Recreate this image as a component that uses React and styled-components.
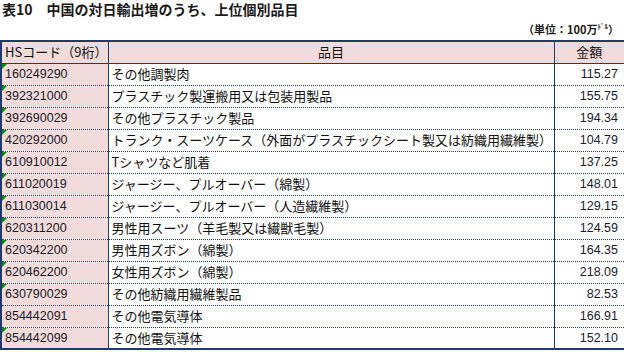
import React from 'react';
import styled, { createGlobalStyle } from 'styled-components';

const GlobalStyle = createGlobalStyle`
  html, body {
    margin: 0;
    padding: 0;
    background: #ffffff;
  }
  body {
    font-family: "Noto Sans CJK JP", "Noto Sans", sans-serif;
    color: #111;
  }
`;

const rows = [
  { code: '160249290', name: 'その他調製肉', value: '115.27', mark: true },
  { code: '392321000', name: 'プラスチック製運搬用又は包装用製品', value: '155.75', mark: true },
  { code: '392690029', name: 'その他プラスチック製品', value: '194.34', mark: true },
  { code: '420292000', name: 'トランク・スーツケース（外面がプラスチックシート製又は紡織用繊維製）', value: '104.79', mark: true },
  { code: '610910012', name: 'Tシャツなど肌着', value: '137.25', mark: true },
  { code: '611020019', name: 'ジャージー、プルオーバー（綿製）', value: '148.01', mark: true },
  { code: '611030014', name: 'ジャージー、プルオーバー（人造繊維製）', value: '129.15', mark: true },
  { code: '620311200', name: '男性用スーツ（羊毛製又は繊獣毛製）', value: '124.59', mark: true },
  { code: '620342200', name: '男性用ズボン（綿製）', value: '164.35', mark: true },
  { code: '620462200', name: '女性用ズボン（綿製）', value: '218.09', mark: true },
  { code: '630790029', name: 'その他紡織用繊維製品', value: '82.53', mark: true },
  { code: '854442091', name: 'その他電気導体', value: '166.91', mark: false },
  { code: '854442099', name: 'その他電気導体', value: '152.10', mark: true },
];

const App = () => {
  return (
    <Page>
      <GlobalStyle />
      <Title>表10　中国の対日輸出増のうち、上位個別品目</Title>
      <Unit>
        （単位：100万<small>ﾄﾞﾙ</small>）
      </Unit>
      <Table>
        <colgroup>
          <col style={{ width: 107 }} />
          <col style={{ width: 446 }} />
          <col style={{ width: 71 }} />
        </colgroup>
        <thead>
          <Row>
            <HeadCell align="left">HSコード（9桁）</HeadCell>
            <HeadCell>品目</HeadCell>
            <HeadCell>金額</HeadCell>
          </Row>
        </thead>
        <tbody>
          {rows.map(row => (
            <Row key={row.code + row.value}>
              <CodeCell>
                {row.mark && <Marker />}
                {row.code}
              </CodeCell>
              <NameCell>{row.name}</NameCell>
              <ValueCell>{row.value}</ValueCell>
            </Row>
          ))}
        </tbody>
      </Table>
    </Page>
  );
};

const Page = styled.div`
  width: 624px;
  height: 352px;
  overflow: hidden;
`;

const Title = styled.h1`
  margin: 0;
  padding: 1px 0 0 2px;
  height: 18px;
  font-size: 14px;
  line-height: 16px;
  font-weight: 700;
  color: #1a1a1a;
  white-space: nowrap;
`;

const Unit = styled.div`
  display: flex;
  justify-content: flex-end;
  align-items: flex-start;
  height: 21px;
  padding-right: 5px;
  font-size: 11px;
  line-height: 20px;
  font-weight: 700;
  color: #1a1a1a;
  small {
    font-size: 7px;
    line-height: 14px;
    font-weight: 700;
  }
`;

const Table = styled.table`
  width: 624px;
  table-layout: fixed;
  border-collapse: collapse;
  border: 2px solid #1f3b6b;
  font-size: 13px;
  tr > * {
    border-left: 1.5px solid #1f3b6b;
  }
  tbody tr + tr td {
    border-top: 1px dotted #1f3b6b;
  }
`;

const Row = styled.tr`
  height: 22px;
`;

const Cell = styled.td`
  height: 21px;
  padding: 0 3px;
  line-height: 16px;
  white-space: nowrap;
  overflow: hidden;
  box-sizing: border-box;
`;

const HeadCell = styled(Cell).attrs({ as: 'th' })`
  font-weight: 400;
  text-align: ${p => p.align || 'center'};
  background: #f2dcdb;
  border-bottom: 1px solid #1f3b6b;
  color: #111;
`;

const CodeCell = styled(Cell)`
  position: relative;
  background: #f2dcdb;
  font-family: "Liberation Sans", Arial, sans-serif;
  font-size: 12.5px;
  color: #1a1a2a;
`;

const Marker = styled.span`
  position: absolute;
  top: 0;
  left: 0;
  width: 0;
  height: 0;
  border-top: 5px solid #0a8a0a;
  border-right: 5px solid transparent;
`;

const NameCell = styled(Cell)`
  background: #ffffff;
`;

const ValueCell = styled(Cell)`
  background: #ffffff;
  text-align: right;
  padding-right: 6px;
  font-family: "Liberation Sans", Arial, sans-serif;
  font-size: 12.5px;
  color: #1a1a2a;
`;

export default App;
